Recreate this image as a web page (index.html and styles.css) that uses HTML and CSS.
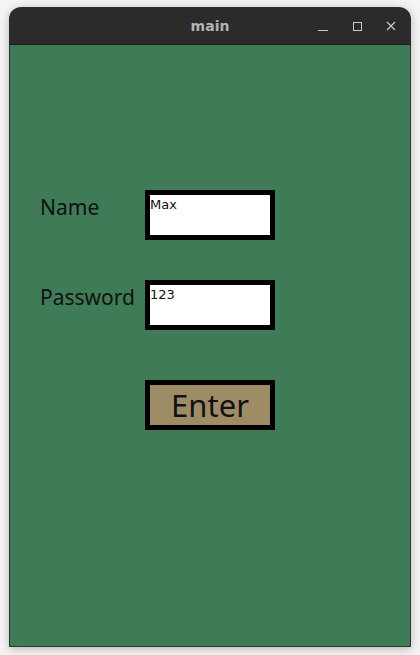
FILE: index.html
```html
<!DOCTYPE html>
<html lang="en">
<head>
    <meta charset="UTF-8">
    <meta name="viewport" content="width=device-width, initial-scale=1.0">
    <title>main</title>
    <link rel="stylesheet" href="styles.css">
</head>
<body>
    <div class="window">
        <div class="titlebar">
            <span class="title">main</span>
            <div class="controls">
                <svg width="12" height="12" viewBox="0 0 12 12"><path d="M1 10.5h10" stroke="#c8c8c8" stroke-width="1"/></svg>
                <svg width="12" height="12" viewBox="0 0 12 12"><rect x="2.5" y="2.5" width="8" height="8" fill="none" stroke="#c8c8c8" stroke-width="1"/></svg>
                <svg width="12" height="12" viewBox="0 0 12 12"><path d="M2 2l8 8M10 2l-8 8" stroke="#c8c8c8" stroke-width="1.2"/></svg>
            </div>
        </div>
        <div class="main">
            <div class="form">
                <label class="lbl">Name</label>
                <div class="box">Max</div>
                <label class="lbl">Password</label>
                <div class="box">123</div>
                <span></span>
                <button class="b">Enter</button>
            </div>
        </div>
    </div>
</body>
</html>
```

FILE: styles.css
```css
*{
    margin: 0;
    padding: 0;
    box-sizing: border-box;
}
body{
    background: #f4f4f4;
    padding: 7px 9px 8px 9px;
    height: 655px;
    overflow: hidden;
}
.window{
    width: 402px;
    height: 640px;
    display: flex;
    flex-direction: column;
    border-radius: 12px 12px 0 0;
    overflow: hidden;
    box-shadow: 0 2px 10px rgba(0,0,0,0.25);
}
.titlebar{
    height: 38px;
    background: #2b2b2b;
    position: relative;
    display: flex;
    justify-content: center;
    align-items: center;
    border-bottom: 1px solid #1e1e1e;
}
.title{
    color: #b4b4b4;
    font-family: 'DejaVu Sans', sans-serif;
    font-weight: bold;
    font-size: 14px;
}
.controls{
    position: absolute;
    right: 14px;
    top: 13px;
    display: flex;
    gap: 22px;
}
.main{
    flex: 1;
    background: #3f7b57;
    border: 1px solid #333;
    border-top: none;
    padding: 145px 0 0 30px;
}
.form{
    display: grid;
    grid-template-columns: 105px 130px;
    grid-auto-rows: 50px;
    row-gap: 40px;
}
.form > :nth-child(5),.form > :nth-child(6){
    margin-top: 10px;
}
.lbl{
    font-family: 'Noto Sans', sans-serif;
    font-size: 21px;
    color: #111;
    padding-top: 3px;
}
.box{
    border: 5px solid #000;
    background: #fff;
    font-family: 'DejaVu Sans', sans-serif;
    font-size: 13px;
    color: #111;
    line-height: 15px;
    padding-top: 2px;
}
.b{
    border: 5px solid #000;
    background: #9e8c66;
    font-family: 'Noto Sans', sans-serif;
    font-size: 31px;
    color: #111;
    height: 50px;
    line-height: 36px;
}
```
